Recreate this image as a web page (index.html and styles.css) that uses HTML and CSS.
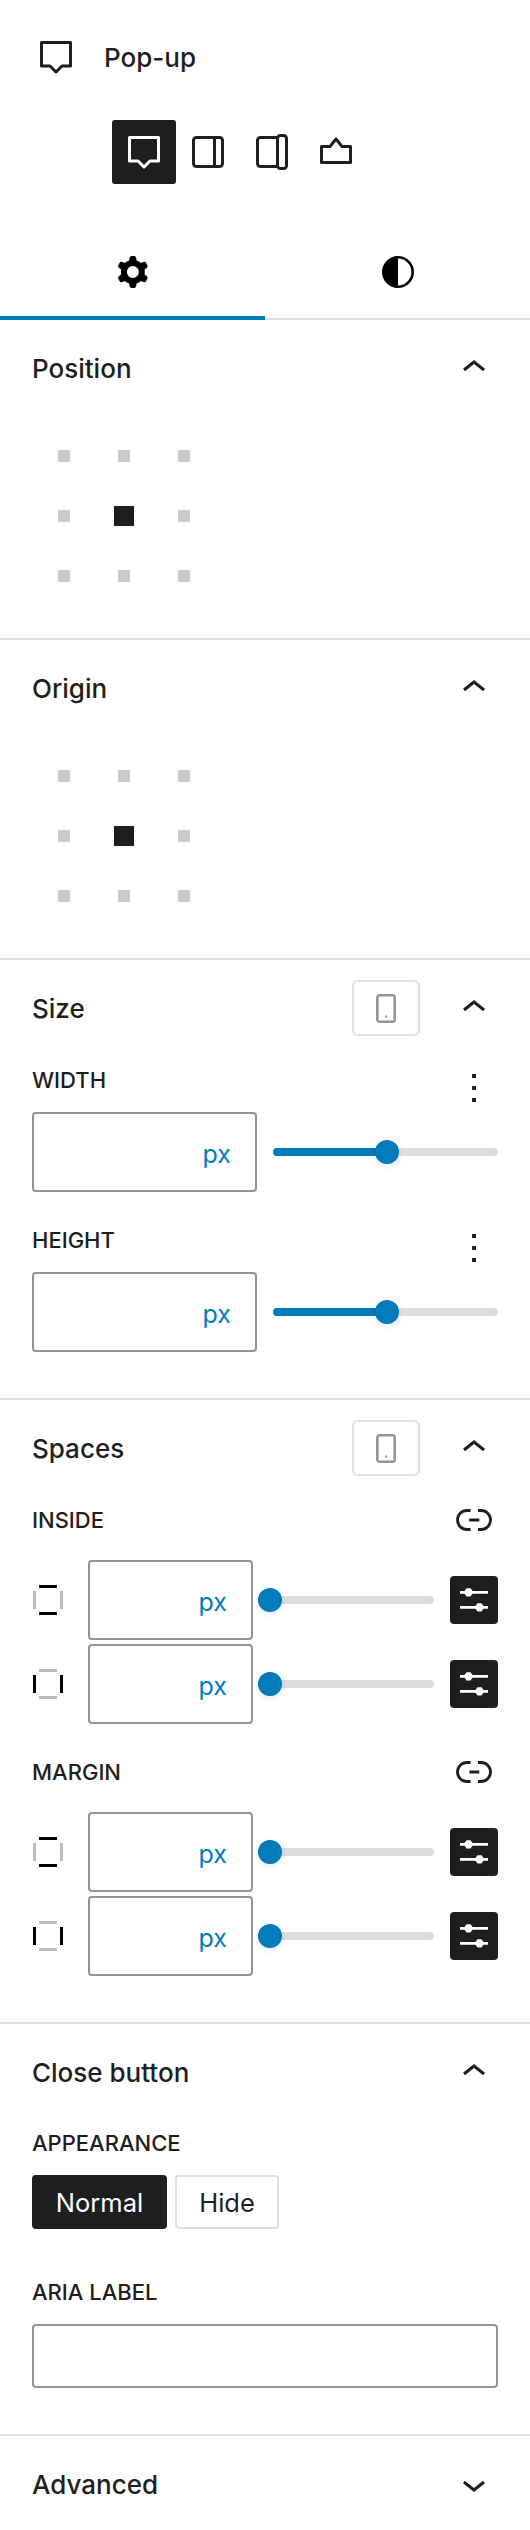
FILE: index.html
```html
<!DOCTYPE html>
<html lang="en">
<head>
<meta charset="utf-8">
<title>Pop-up</title>
<link rel="stylesheet" href="styles.css">
</head>
<body>
<svg class="defs" aria-hidden="true">
  <symbol id="popup" viewBox="0 0 32 33"><path d="M1.5 1.5H30.5V25H22L16 31L10 25H1.5Z" fill="none" stroke="currentColor" stroke-width="3" stroke-linejoin="round"/></symbol>
  <symbol id="up" viewBox="0 0 24 24"><path d="M6.5 12.4L12 8l5.5 4.4-.9 1.2L12 10l-4.5 3.6-1-1.2z" fill="currentColor"/></symbol>
  <symbol id="down" viewBox="0 0 24 24"><path d="M17.5 11.6L12 16l-5.5-4.4.9-1.2L12 14l4.5-3.6 1 1.2z" fill="currentColor"/></symbol>
  <symbol id="more" viewBox="0 0 24 24"><path d="M13 19h-2v-2h2v2zm0-6h-2v-2h2v2zm0-6h-2V5h2v2z" fill="currentColor"/></symbol>
  <symbol id="mobile" viewBox="0 0 20 29"><rect x="1.3" y="1.3" width="17.4" height="26.4" rx="2.2" fill="none" stroke="currentColor" stroke-width="2.6"/><rect x="9" y="21.5" width="2" height="2" fill="currentColor"/></symbol>
  <symbol id="link" viewBox="0 0 36 22"><path d="M14.5 1.5H11a9.5 9.5 0 0 0 0 19H14.5M22 1.5H25a9.5 9.5 0 0 1 0 19H22M13.3 11H23.3" fill="none" stroke="currentColor" stroke-width="2.8"/></symbol>
  <symbol id="sliders" viewBox="0 0 48 48"><path d="M10 16.3H38M10 31.3H38" stroke="#fff" stroke-width="2.8" fill="none"/><path d="M13.5 16.3L16.5 12.2H20.5L23.5 16.3L20.5 20.4H16.5ZM24.5 31.3L27.5 27.2H31.5L34.5 31.3L31.5 35.4H27.5Z" fill="#fff"/></symbol>
  <symbol id="side-v" viewBox="0 0 30 30"><rect x="6" y="0" width="18" height="3" fill="#000"/><rect x="6" y="27" width="18" height="3" fill="#000"/><rect x="0" y="6" width="3" height="18" fill="#bbb"/><rect x="27" y="6" width="3" height="18" fill="#bbb"/></symbol>
  <symbol id="side-h" viewBox="0 0 30 30"><rect x="6" y="0" width="18" height="3" fill="#bbb"/><rect x="6" y="27" width="18" height="3" fill="#bbb"/><rect x="0" y="6" width="3" height="18" fill="#000"/><rect x="27" y="6" width="3" height="18" fill="#000"/></symbol>
</svg>

<header class="block-title">
  <svg class="icon-popup"><use href="#popup"/></svg>
  <h1 class="block-name">Pop-up</h1>
</header>

<div class="switcher">
  <button class="switch is-active"><svg class="icon-popup"><use href="#popup"/></svg></button>
  <button class="switch"><svg class="icon-32" viewBox="0 0 32 32"><rect x="1.5" y="1.5" width="29" height="29" rx="3" fill="none" stroke="currentColor" stroke-width="3"/><path d="M22.5 1.5V30.5" stroke="currentColor" stroke-width="3"/></svg></button>
  <button class="switch"><svg class="icon-36" viewBox="0 0 32 36"><path d="M21.5 3.5H4.5a3 3 0 0 0-3 3V29.5a3 3 0 0 0 3 3H21.5" fill="none" stroke="currentColor" stroke-width="3"/><rect x="21.5" y="1.5" width="9" height="33" rx="3" fill="none" stroke="currentColor" stroke-width="3"/></svg></button>
  <button class="switch"><svg class="icon-32" viewBox="0 0 32 32"><path d="M1.5 10.5H10L16 3L22 10.5H30.5V26.5H1.5Z" fill="none" stroke="currentColor" stroke-width="3" stroke-linejoin="round"/></svg></button>
</div>

<div class="tabs">
  <button class="tab is-active">
    <svg class="icon-48" viewBox="0 0 24 24"><path fill-rule="evenodd" clip-rule="evenodd" fill="#000" d="M10.289 4.836A1 1 0 0111.275 4h1.306a1 1 0 01.987.836l.244 1.466c.787.26 1.503.679 2.108 1.218l1.393-.522a1 1 0 011.216.437l.653 1.13a1 1 0 01-.23 1.273l-1.148.944a6.025 6.025 0 010 2.435l1.149.946a1 1 0 01.23 1.272l-.653 1.13a1 1 0 01-1.216.437l-1.394-.522c-.605.54-1.32.958-2.108 1.218l-.244 1.466a1 1 0 01-.987.836h-1.306a1 1 0 01-.986-.836l-.244-1.466a5.995 5.995 0 01-2.108-1.218l-1.394.522a1 1 0 01-1.217-.436l-.653-1.131a1 1 0 01.23-1.272l1.149-.946a6.026 6.026 0 010-2.435l-1.148-.944a1 1 0 01-.23-1.272l.653-1.131a1 1 0 011.217-.437l1.393.522a5.994 5.994 0 012.108-1.218l.244-1.466zM14.929 12a3 3 0 11-6 0 3 3 0 016 0z"/></svg>
  </button>
  <button class="tab">
    <svg class="icon-32" viewBox="0 0 32 32"><circle cx="16" cy="16" r="14.7" fill="none" stroke="#000" stroke-width="2.6"/><path d="M16 1.3a14.7 14.7 0 0 0 0 29.4Z" fill="#000"/></svg>
  </button>
</div>

<section class="panel">
  <div class="panel-head"><h2 class="panel-title">Position</h2><svg class="icon-48"><use href="#up"/></svg></div>
  <div class="dots">
    <span class="dot"></span><span class="dot"></span><span class="dot"></span>
    <span class="dot"></span><span class="dot is-on"></span><span class="dot"></span>
    <span class="dot"></span><span class="dot"></span><span class="dot"></span>
  </div>
</section>

<section class="panel">
  <div class="panel-head"><h2 class="panel-title">Origin</h2><svg class="icon-48"><use href="#up"/></svg></div>
  <div class="dots">
    <span class="dot"></span><span class="dot"></span><span class="dot"></span>
    <span class="dot"></span><span class="dot is-on"></span><span class="dot"></span>
    <span class="dot"></span><span class="dot"></span><span class="dot"></span>
  </div>
</section>

<section class="panel panel-size">
  <div class="panel-head">
    <h2 class="panel-title">Size</h2>
    <button class="device"><svg class="icon-mobile"><use href="#mobile"/></svg></button>
    <svg class="icon-48"><use href="#up"/></svg>
  </div>
  <div class="control">
    <div class="label-row tall"><span class="label">WIDTH</span><svg class="icon-48"><use href="#more"/></svg></div>
    <div class="size-row">
      <div class="field"><span class="unit">px</span></div>
      <div class="slider"><div class="fill" style="width:50.7%"><span class="thumb"></span></div></div>
    </div>
  </div>
  <div class="control">
    <div class="label-row tall"><span class="label">HEIGHT</span><svg class="icon-48"><use href="#more"/></svg></div>
    <div class="size-row">
      <div class="field"><span class="unit">px</span></div>
      <div class="slider"><div class="fill" style="width:50.7%"><span class="thumb"></span></div></div>
    </div>
  </div>
</section>

<section class="panel panel-spaces">
  <div class="panel-head">
    <h2 class="panel-title">Spaces</h2>
    <button class="device"><svg class="icon-mobile"><use href="#mobile"/></svg></button>
    <svg class="icon-48"><use href="#up"/></svg>
  </div>
  <div class="space-group">
    <div class="label-row"><span class="label">INSIDE</span><svg class="icon-link"><use href="#link"/></svg></div>
    <div class="space-rows">
      <div class="space-row">
        <svg class="icon-side"><use href="#side-v"/></svg>
        <div class="field"><span class="unit">px</span></div>
        <div class="slider"><div class="fill" style="width:12px"><span class="thumb"></span></div></div>
        <button class="square"><svg class="icon-48"><use href="#sliders"/></svg></button>
      </div>
      <div class="space-row">
        <svg class="icon-side"><use href="#side-h"/></svg>
        <div class="field"><span class="unit">px</span></div>
        <div class="slider"><div class="fill" style="width:12px"><span class="thumb"></span></div></div>
        <button class="square"><svg class="icon-48"><use href="#sliders"/></svg></button>
      </div>
    </div>
  </div>
  <div class="space-group">
    <div class="label-row"><span class="label">MARGIN</span><svg class="icon-link"><use href="#link"/></svg></div>
    <div class="space-rows">
      <div class="space-row">
        <svg class="icon-side"><use href="#side-v"/></svg>
        <div class="field"><span class="unit">px</span></div>
        <div class="slider"><div class="fill" style="width:12px"><span class="thumb"></span></div></div>
        <button class="square"><svg class="icon-48"><use href="#sliders"/></svg></button>
      </div>
      <div class="space-row">
        <svg class="icon-side"><use href="#side-h"/></svg>
        <div class="field"><span class="unit">px</span></div>
        <div class="slider"><div class="fill" style="width:12px"><span class="thumb"></span></div></div>
        <button class="square"><svg class="icon-48"><use href="#sliders"/></svg></button>
      </div>
    </div>
  </div>
</section>

<section class="panel panel-close">
  <div class="panel-head"><h2 class="panel-title">Close button</h2><svg class="icon-48"><use href="#up"/></svg></div>
  <div class="stack">
    <span class="label">APPEARANCE</span>
    <div class="choices"><button class="choice is-active">Normal</button><button class="choice">Hide</button></div>
  </div>
  <div class="stack">
    <span class="label">ARIA LABEL</span>
    <div class="field field-wide"></div>
  </div>
</section>

<section class="panel panel-last">
  <div class="panel-head"><h2 class="panel-title">Advanced</h2><svg class="icon-48"><use href="#down"/></svg></div>
</section>
</body>
</html>
```

FILE: styles.css
```css
* { box-sizing: border-box; }

html, body { margin: 0; padding: 0; background: #fff; }

body {
  width: 530px;
  height: 2530px;
  overflow: hidden;
  font-family: Inter, "Liberation Sans", sans-serif;
  color: #1e1e1e;
}

button {
  font: inherit;
  color: inherit;
  background: none;
  border: 0;
  padding: 0;
}

svg { display: block; flex: none; }
.defs { display: none; }

.icon-48 { width: 48px; height: 48px; }
.icon-32 { width: 32px; height: 32px; }
.icon-36 { width: 32px; height: 36px; }
.icon-popup { width: 32px; height: 33px; }
.icon-mobile { width: 20px; height: 29px; color: #949494; }
.icon-link { width: 36px; height: 22px; margin-right: 6px; }
.icon-side { width: 30px; height: 30px; margin: 0 25px 0 1px; }

.block-title {
  display: flex;
  align-items: center;
  gap: 32px;
  height: 48px;
  margin-top: 33px;
  padding-left: 40px;
}

.block-name {
  margin: 0;
  font-size: 26px;
  font-weight: 450;
}

.switcher {
  display: flex;
  margin: 39px 0 0 112px;
}

.switch {
  display: flex;
  align-items: center;
  justify-content: center;
  width: 64px;
  height: 64px;
  border-radius: 3px;
}

.switch.is-active {
  background: #1e1e1e;
  color: #fff;
}

.tabs {
  display: flex;
  height: 96px;
  margin-top: 40px;
  border-bottom: 2px solid #e0e0e0;
}

.tab {
  flex: 1;
  display: flex;
  align-items: center;
  justify-content: center;
  height: 96px;
}

.tab.is-active {
  padding-top: 4px;
  border-bottom: 4px solid #007cba;
}

.panel {
  padding: 24px 32px 32px;
  border-bottom: 2px solid #e0e0e0;
}

.panel-head {
  display: flex;
  align-items: center;
  height: 48px;
}

.panel-title {
  margin: 0 auto 0 0;
  font-size: 26px;
  font-weight: 450;
}

.device {
  display: flex;
  align-items: center;
  justify-content: center;
  width: 68px;
  height: 56px;
  margin-right: 30px;
  border: 2px solid #e0e0e0;
  border-radius: 6px;
}

.dots {
  display: grid;
  grid-template-columns: repeat(3, 60px);
  grid-auto-rows: 60px;
  margin: 34px 0 0 2px;
}

.dot {
  width: 12px;
  height: 12px;
  place-self: center;
  background: #ccc;
}

.dot.is-on {
  width: 20px;
  height: 20px;
  background: #1e1e1e;
}

.label {
  display: block;
  font-size: 22px;
  font-weight: 450;
  line-height: 32px;
}

.label-row {
  display: flex;
  align-items: center;
  justify-content: space-between;
  height: 32px;
}

.label-row.tall {
  align-items: flex-start;
  height: 48px;
}

.panel-size { padding-bottom: 46px; }

.control { margin-top: 32px; }

.size-row {
  display: grid;
  grid-template-columns: 1fr 1fr;
  align-items: center;
  gap: 16px;
}

.field {
  display: flex;
  align-items: center;
  justify-content: flex-end;
  height: 80px;
  padding: 4px 24px 0 0;
  border: 2px solid #949494;
  border-radius: 4px;
}

.unit {
  font-size: 25px;
  color: #007cba;
}

.slider {
  position: relative;
  height: 8px;
  border-radius: 4px;
  background: #ddd;
}

.fill {
  position: relative;
  height: 100%;
  border-radius: 4px;
  background: #007cba;
}

.thumb {
  position: absolute;
  top: -8px;
  right: -12px;
  width: 24px;
  height: 24px;
  border-radius: 50%;
  background: #007cba;
  box-shadow: 0 2px 6px rgba(0, 0, 0, .1);
}

.panel-spaces { padding-bottom: 46px; }

.space-group { margin-top: 32px; }

.space-rows {
  display: flex;
  flex-direction: column;
  gap: 4px;
  margin-top: 24px;
}

.space-row {
  display: flex;
  align-items: center;
  height: 80px;
}

.space-row .field {
  flex: none;
  width: 165px;
  margin-right: 5px;
}

.space-row .slider {
  flex: none;
  width: 176px;
  margin-right: 16px;
}

.square {
  width: 48px;
  height: 48px;
  border-radius: 4px;
  background: #1e1e1e;
}

.panel-close { padding-bottom: 46px; }

.stack { margin-top: 31px; }
.stack + .stack { margin-top: 47px; }

.choices {
  display: flex;
  gap: 8px;
  margin-top: 16px;
}

.choice {
  width: 104px;
  height: 54px;
  font-size: 25.5px;
  border: 2px solid #e0e0e0;
  border-radius: 4px;
}

.choice.is-active {
  width: 135px;
  color: #fff;
  background: #1e1e1e;
  border-color: #1e1e1e;
}

.field-wide {
  height: 64px;
  margin-top: 16px;
  padding: 0;
}

.panel-last { border-bottom: 0; }
```
